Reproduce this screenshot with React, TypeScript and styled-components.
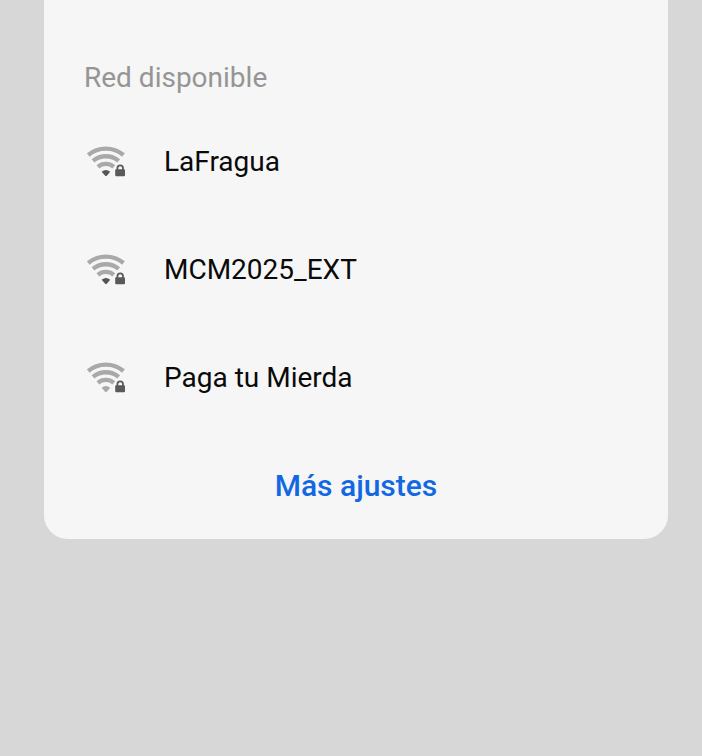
import React from "react";
import styled, { createGlobalStyle } from "styled-components";

const GlobalStyle = createGlobalStyle`
  body {
    margin: 0;
    background: #d7d7d7;
    font-family: Roboto, "Liberation Sans", sans-serif;
  }
`;

const Page = styled.main`
  min-height: 100vh;
  box-sizing: border-box;
  padding: 0 34px 0 44px;
  background: #d7d7d7;
`;

const Panel = styled.section`
  display: flex;
  flex-direction: column;
  padding-top: 62px;
  border-radius: 0 0 24px 24px;
  background: #f6f6f6;
`;

const Heading = styled.h2`
  margin: 0;
  padding: 0 40px 14px;
  font-size: 28px;
  line-height: 32px;
  font-weight: 400;
  color: #959595;
`;

const NetworkList = styled.ul`
  margin: 0;
  padding: 0;
  list-style: none;
`;

const NetworkRow = styled.button`
  display: flex;
  align-items: center;
  gap: 38px;
  width: 100%;
  height: 108px;
  padding: 0 42px;
  border: 0;
  background: transparent;
  font: inherit;
  font-size: 28px;
  line-height: 32px;
  color: #0a0a0a;
  text-align: left;
  cursor: pointer;
`;

const MoreButton = styled.button`
  padding: 36px 40px 35px;
  border: 0;
  border-radius: 0 0 24px 24px;
  background: transparent;
  font: inherit;
  font-size: 30px;
  line-height: 36px;
  font-weight: 500;
  color: #1268e3;
  cursor: pointer;
`;

const Icon = styled.svg`
  flex: none;
  display: block;
`;

function SecuredWifi({ inRange }: { inRange: boolean }) {
  return (
    <Icon width="40" height="32" viewBox="0 1 40 32" aria-hidden="true">
      <g fill="none" stroke="#a9a9a9" strokeWidth="4.3">
        <path d="M2.2 10A27.5 27.5 0 0 1 37.5 10" />
        <path d="M7 15.9A20 20 0 0 1 32.7 15.9" />
        <path d="M11.9 21.9A12.2 12.2 0 0 1 27.8 21.9" />
      </g>
      <path d="M15.6 26.8Q20 23.2 24.2 26.8L20.8 30.8Q20 31.6 19.2 30.8Z" fill={inRange ? "#555" : "#a9a9a9"} />
      <path d="M31.4 25V23.2a2.8 2.8 0 0 1 5.6 0V25" fill="none" stroke="#5a5a5a" strokeWidth="1.8" />
      <rect x="29.2" y="24.2" width="9.8" height="7" rx="1" fill="#5a5a5a" />
    </Icon>
  );
}

const networks = [
  { name: "LaFragua", inRange: true },
  { name: "MCM2025_EXT", inRange: true },
  { name: "Paga tu Mierda", inRange: false },
];

export default function App() {
  return (
    <>
      <GlobalStyle />
      <Page>
        <Panel>
          <Heading>Red disponible</Heading>
          <NetworkList>
            {networks.map((network) => (
              <li key={network.name}>
                <NetworkRow type="button">
                  <SecuredWifi inRange={network.inRange} />
                  {network.name}
                </NetworkRow>
              </li>
            ))}
          </NetworkList>
          <MoreButton type="button">Más ajustes</MoreButton>
        </Panel>
      </Page>
    </>
  );
}
